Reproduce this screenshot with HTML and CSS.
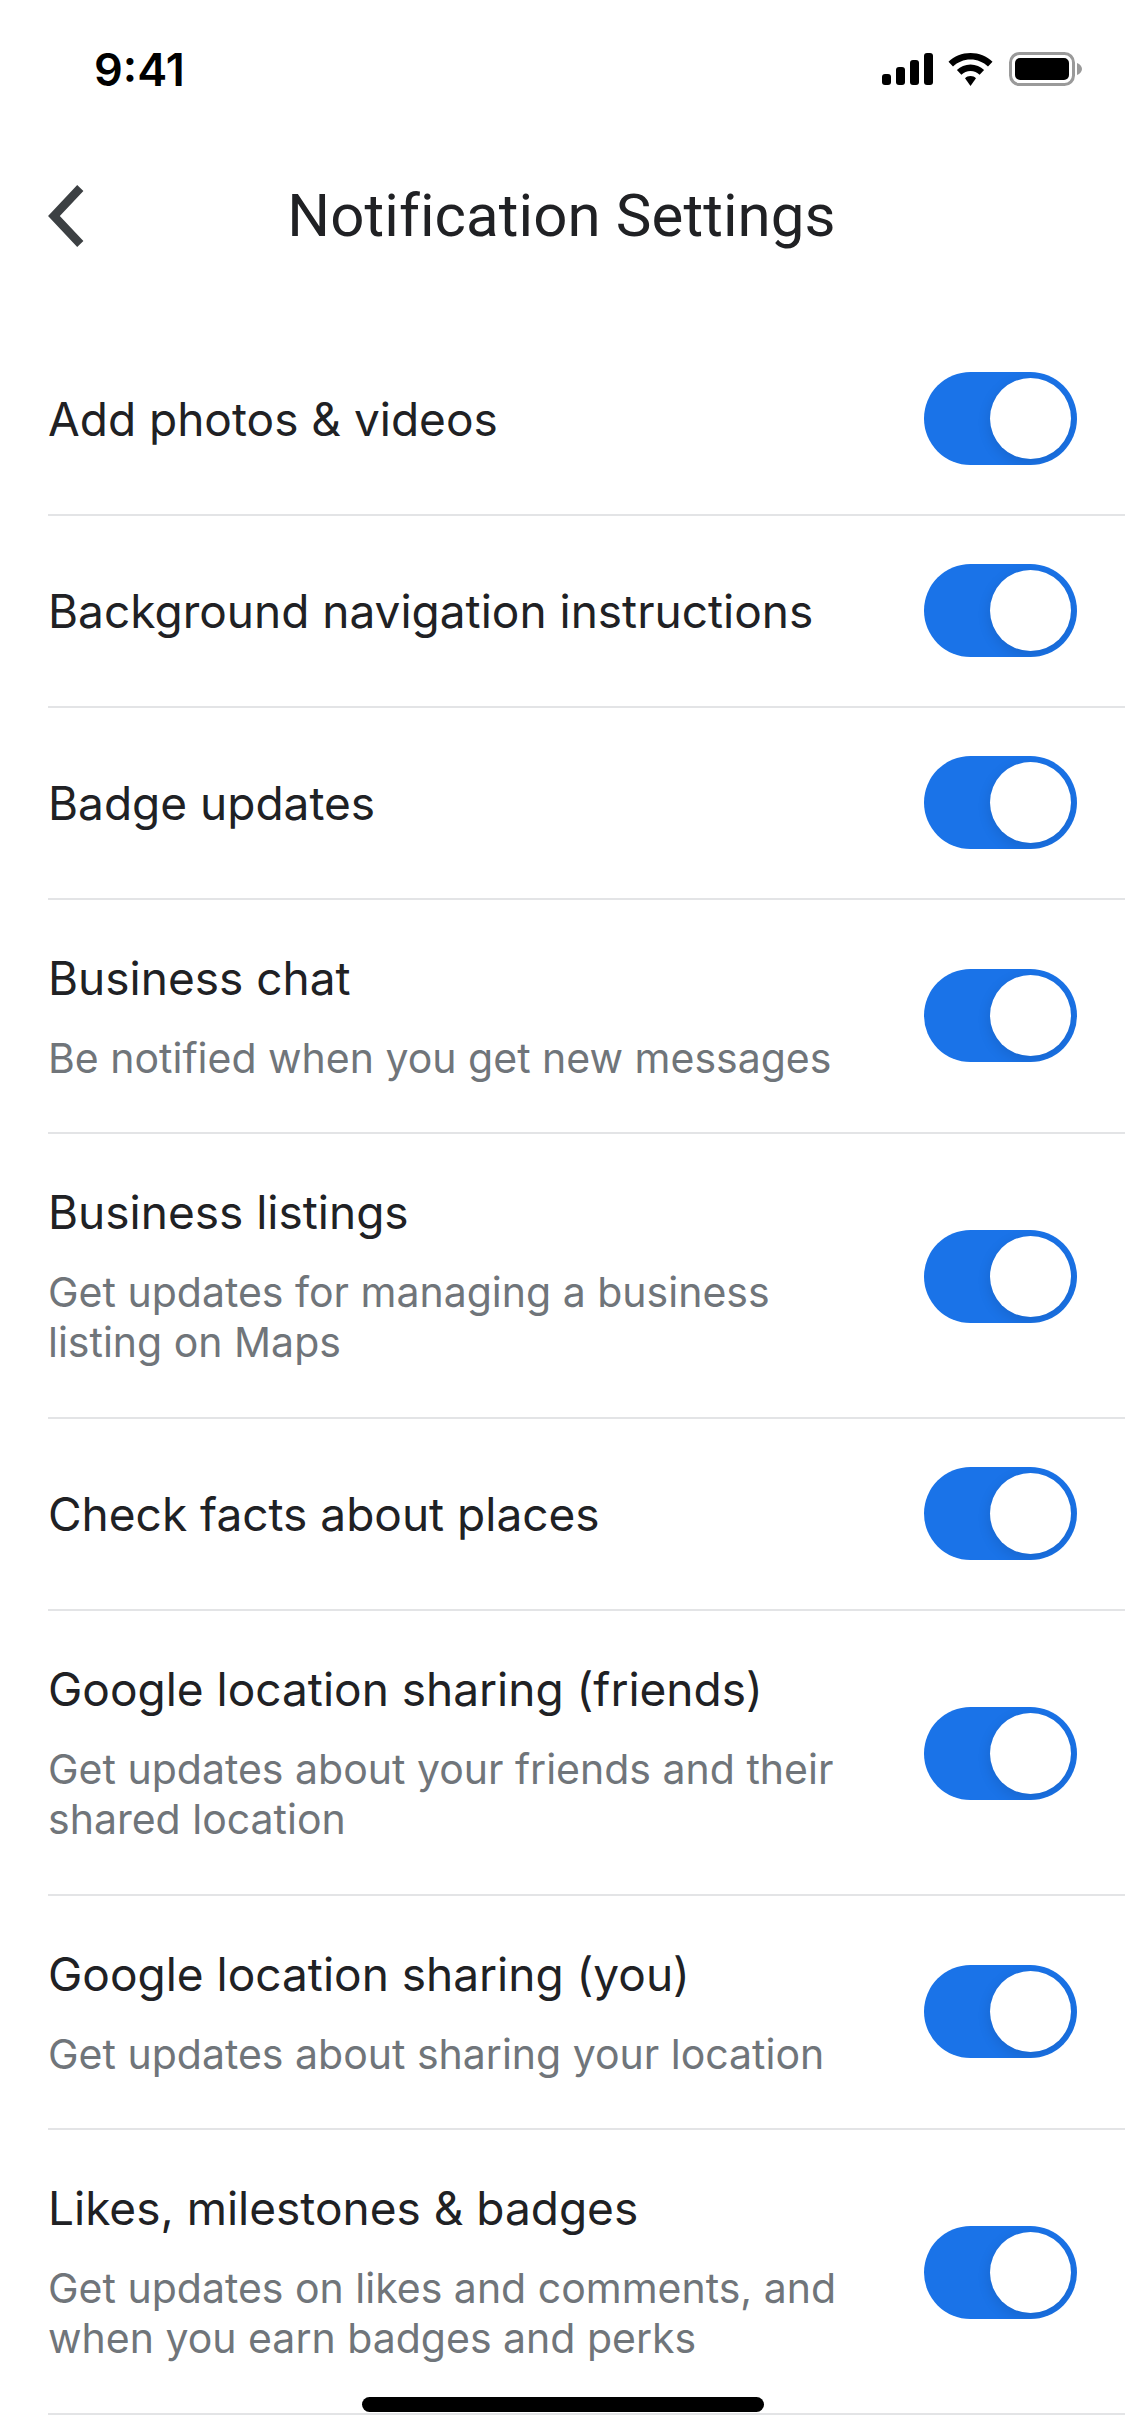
FILE: index.html
```html
<!DOCTYPE html>
<html lang="en">
<head>
  <meta charset="UTF-8" />
  <meta name="viewport" content="width=device-width, initial-scale=1.0"/>
  <title>Notification Settings</title>
  <link rel="stylesheet" href="styles.css">
</head>
<body>

  <div class="screen">
    <div class="status-bar">
      <span class="clock">9:41</span>
      <div class="status-icons">
        <svg class="signal" width="51" height="32" viewBox="0 0 51 32">
          <rect x="0" y="21" width="9" height="11" rx="3"/>
          <rect x="14" y="14" width="9" height="18" rx="3"/>
          <rect x="28" y="7" width="9" height="25" rx="3"/>
          <rect x="42" y="0" width="9" height="32" rx="3"/>
        </svg>
        <svg class="wifi" width="45" height="33" viewBox="0 0 45 33">
          <path d="M22.5 0C14 0 6.300 3.300 0.500 8.800L5 13.500C9.500 9.200 15.700 6.500 22.500 6.500S35.500 9.200 40 13.500L44.500 8.800C38.700 3.300 31 0 22.500 0Z"/>
          <path d="M22.500 11.500C17.200 11.500 12.400 13.600 8.900 17.100L13.400 21.700C15.700 19.400 19 18 22.500 18S29.300 19.400 31.600 21.700L36.100 17.100C32.600 13.600 27.800 11.500 22.500 11.500Z"/>
          <path d="M22.500 23C20.300 23 18.400 23.900 17 25.300L22.500 33L28 25.300C26.600 23.900 24.700 23 22.500 23Z"/>
        </svg>
        <svg class="battery" width="73" height="34" viewBox="0 0 73 34">
          <rect x="1.500" y="1.500" width="63" height="31" rx="9" fill="none" stroke="#9a9a9a" stroke-width="3"/>
          <rect x="6" y="6" width="54" height="22" rx="5"/>
          <path d="M68 11C71 12 73 14.500 73 17S71 22 68 23Z" fill="#9a9a9a"/>
        </svg>
      </div>
    </div>

    <div class="title-bar">
      <svg class="back-icon" width="36" height="62" viewBox="0 0 36 62">
        <path d="M32.300 3L5.900 31L32.300 59" fill="none" stroke="#3c4043" stroke-width="8.500"/>
      </svg>
      <h1>Notification Settings</h1>
    </div>

    <div class="settings-list">
      <div class="setting">
        <div class="setting-text"><div class="setting-name">Add photos &amp; videos</div></div>
        <span class="toggle"><span class="knob"></span></span>
      </div>
      <div class="setting">
        <div class="setting-text"><div class="setting-name">Background navigation instructions</div></div>
        <span class="toggle"><span class="knob"></span></span>
      </div>
      <div class="setting">
        <div class="setting-text"><div class="setting-name">Badge updates</div></div>
        <span class="toggle"><span class="knob"></span></span>
      </div>
      <div class="setting setting-sub">
        <div class="setting-text">
          <div class="setting-name">Business chat</div>
          <div class="setting-desc">Be notified when you get new messages</div>
        </div>
        <span class="toggle"><span class="knob"></span></span>
      </div>
      <div class="setting setting-tall">
        <div class="setting-text">
          <div class="setting-name">Business listings</div>
          <div class="setting-desc">Get updates for managing a business<br />listing on Maps</div>
        </div>
        <span class="toggle"><span class="knob"></span></span>
      </div>
      <div class="setting">
        <div class="setting-text"><div class="setting-name">Check facts about places</div></div>
        <span class="toggle"><span class="knob"></span></span>
      </div>
      <div class="setting setting-tall">
        <div class="setting-text">
          <div class="setting-name">Google location sharing (friends)</div>
          <div class="setting-desc">Get updates about your friends and their<br />shared location</div>
        </div>
        <span class="toggle"><span class="knob"></span></span>
      </div>
      <div class="setting setting-sub">
        <div class="setting-text">
          <div class="setting-name">Google location sharing (you)</div>
          <div class="setting-desc">Get updates about sharing your location</div>
        </div>
        <span class="toggle"><span class="knob"></span></span>
      </div>
      <div class="setting setting-tall">
        <div class="setting-text">
          <div class="setting-name">Likes, milestones &amp; badges</div>
          <div class="setting-desc">Get updates on likes and comments, and<br />when you earn badges and perks</div>
        </div>
        <span class="toggle"><span class="knob"></span></span>
      </div>
    </div>

    <div class="home-indicator"></div>
  </div>

</body>
</html>
```

FILE: styles.css
```css
body {
  margin: 0;
  padding: 0;
  background-color: #fff;
  font-family: 'Inter', sans-serif;
}
.screen {
  position: relative;
  width: 1125px;
  height: 2436px;
  overflow: hidden;
}
.status-bar {
  display: flex;
  justify-content: space-between;
  align-items: center;
  height: 138px;
  padding: 0 43px 0 94px;
  box-sizing: border-box;
}
.clock {
  font-size: 45px;
  font-weight: 600;
  color: #000;
}
.status-icons {
  display: flex;
  align-items: center;
  gap: 15px;
}
.status-icons svg {
  display: block;
  fill: #000;
}
.status-icons .battery {
  margin-left: 1px;
}
.title-bar {
  position: relative;
  display: flex;
  justify-content: center;
  align-items: center;
  height: 155px;
  margin-bottom: 31px;
}
.back-icon {
  position: absolute;
  left: 48px;
  top: 47px;
}
h1 {
  margin: 0 0 0 -2px;
  font-family: 'Roboto', sans-serif;
  font-size: 60px;
  font-weight: 400;
  letter-spacing: 0.1px;
  color: #202124;
}
.setting {
  display: flex;
  justify-content: space-between;
  align-items: center;
  min-height: 192px;
  margin-left: 48px;
  padding: 46px 48px 46px 0;
  box-sizing: border-box;
  border-bottom: 2px solid #e3e4e6;
}
.setting-name {
  font-size: 46px;
  line-height: 60px;
  color: #202124;
}
.setting-desc {
  margin-top: 25px;
  font-size: 41px;
  line-height: 50px;
  color: #70757a;
}
.setting-sub {
  padding: 48px 48px 48px 0;
}
.setting-sub .setting-desc {
  padding-bottom: 1px;
}
.setting-tall {
  padding: 48px 48px 45px 0;
}
.setting-tall .setting-desc {
  padding-bottom: 5px;
}
.toggle {
  display: flex;
  justify-content: flex-end;
  flex-shrink: 0;
  width: 153px;
  height: 93px;
  margin-top: -1px;
  padding: 6px;
  box-sizing: border-box;
  border-radius: 47px;
  background-color: #1a73e8;
  overflow: hidden;
}
.knob {
  width: 81px;
  height: 81px;
  border-radius: 50%;
  background-color: #fff;
  box-shadow: 0 4px 14px rgba(0,0,0,0.12);
}
.home-indicator {
  position: absolute;
  left: 362px;
  top: 2397px;
  width: 402px;
  height: 15px;
  border-radius: 8px;
  background-color: #000;
}
```
